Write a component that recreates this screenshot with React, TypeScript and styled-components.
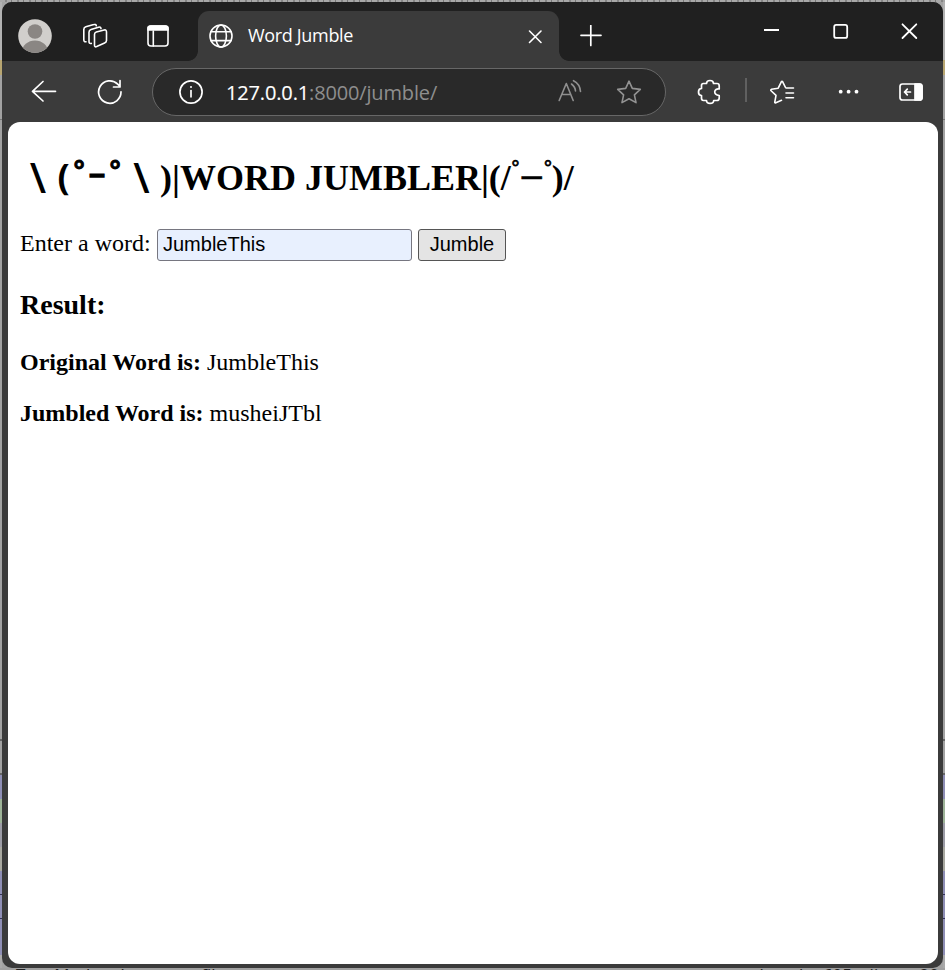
import React from "react";
import styled, { createGlobalStyle } from "styled-components";

const GlobalStyle = createGlobalStyle`
  * { box-sizing: border-box; }
  body { margin: 0; background: #9c9c9c; overflow: hidden; }
`;

const Desktop = styled.div`
  width: 945px;
  height: 970px;
  display: grid;
  grid-template: 2px 966px 2px / 2px 941px 2px;
  overflow: hidden;
  background: #a3a3a3;
`;

const TopEdge = styled.div`
  grid-column: 1 / -1;
  background: repeating-linear-gradient(90deg, #a8a8a8 0 5px, #858585 5px 7px, #a8a8a8 7px 11px, #777 11px 12px);
`;

const SideEdge = styled.div`
  background: linear-gradient(
    #b2b2b2 0 58px, #b8a671 58px 73px, #a2a2a2 73px 117px, #777 117px 118px,
    #a2a2a2 118px 737px, #666 737px 739px, #a2a2a2 739px 771px, #666 771px 773px,
    #8e8eb5 773px 797px, #9db398 797px 821px, #9c9ca6 821px 845px, #a8a8a0 845px 869px,
    #8e8eb5 869px 892px, #333355 892px 893px, #8e8eb5 893px 916px, #333355 916px 917px,
    #8e8eb5 917px 953px, #aaa 953px
  );
`;

const BottomEdge = styled.div`
  grid-column: 1 / -1;
  display: flex;
  justify-content: space-between;
  padding: 0 6px 0 16px;
  overflow: hidden;
  white-space: pre;
  color: #222;
  background: #a0a0a0;
  font: 17px/14px "Open Sans", sans-serif;
`;

const Window = styled.main`
  display: flex;
  flex-direction: column;
  border-radius: 10px;
  background: #3b3b3b;
  overflow: hidden;
`;

const TitleBar = styled.header`
  height: 59px;
  display: flex;
  align-items: flex-start;
  background: #202020;
`;

const Toolbar = styled.nav`
  height: 61px;
  display: flex;
  align-items: flex-start;
  padding-top: 7px;
`;

const IconButton = styled.button<{ $width: number; $height?: number }>`
  flex: none;
  display: flex;
  align-items: center;
  justify-content: center;
  width: ${(p) => p.$width}px;
  height: ${(p) => p.$height ?? 48}px;
  padding: 0;
  border: 0;
  background: transparent;
  color: #fff;
`;

const Tab = styled.div`
  position: relative;
  flex: none;
  width: 361px;
  height: 50px;
  margin-top: 9px;
  margin-left: 4px;
  padding: 0 13px 0 11px;
  display: flex;
  align-items: center;
  border-radius: 11px 11px 0 0;
  background: #3b3b3b;
  color: #fff;
  &::before,
  &::after {
    content: "";
    position: absolute;
    bottom: 0;
    width: 10px;
    height: 10px;
  }
  &::before {
    left: -10px;
    background: radial-gradient(circle at 0 0, transparent 9.5px, #3b3b3b 10.2px);
  }
  &::after {
    right: -10px;
    background: radial-gradient(circle at 100% 0, transparent 9.5px, #3b3b3b 10.2px);
  }
`;

const TabTitle = styled.span`
  flex: 1;
  margin-left: 15px;
  padding-bottom: 2px;
  font: 18px/24px "Open Sans", sans-serif;
  letter-spacing: -0.33px;
`;

const AddressBar = styled.div`
  flex: none;
  width: 514px;
  height: 48px;
  margin-left: 18px;
  display: flex;
  align-items: center;
  border: 1.5px solid #676767;
  border-radius: 24px;
  background: #292929;
`;

const Url = styled.span`
  flex: 1;
  padding: 2px 0 0 1px;
  color: #8e8e8e;
  font: 20px/28px "Open Sans", sans-serif;
  letter-spacing: -0.15px;
  white-space: nowrap;
`;

const Host = styled.span`
  color: #fff;
  -webkit-text-stroke: 0.15px #fff;
`;

const Divider = styled.i`
  width: 2px;
  height: 24px;
  margin-top: 10px;
  background: #606060;
`;

const Spacer = styled.div`
  flex: 1;
`;

const Page = styled.section`
  height: 842px;
  margin: 0 5px 0 6px;
  padding: 29px 12px 0;
  border-radius: 12px;
  background: #fff;
  color: #000;
  font: 24px/27px "Liberation Serif", serif;
`;

const Heading = styled.h2`
  display: flex;
  height: 54px;
  margin: 0;
  font-size: 36px;
  line-height: 54px;
  white-space: pre;
`;

const Glyph = styled.span<{
  $width: number;
  $size?: number;
  $lift?: number;
  $face?: string;
  $weight?: number;
  $stroke?: number;
}>`
  display: flex;
  justify-content: center;
  width: ${(p) => p.$width}px;
  margin-top: ${(p) => -(p.$lift ?? 0)}px;
  font-family: ${(p) => p.$face ?? '"Liberation Sans"'}, sans-serif;
  font-size: ${(p) => p.$size ?? 36}px;
  font-weight: ${(p) => p.$weight ?? 700};
  -webkit-text-stroke: ${(p) => p.$stroke ?? 0}px #000;
`;

const Form = styled.form`
  display: flex;
  height: 32px;
  margin-top: 24px;
`;

const Label = styled.label`
  width: 137px;
  line-height: 29px;
`;

const WordInput = styled.input`
  width: 255px;
  height: 32px;
  padding: 0 5px 2px;
  border: 1px solid #767680;
  border-radius: 3px;
  background: #e8f0fe;
  color: #000;
  font: 20px "Liberation Sans", sans-serif;
`;

const Submit = styled.button`
  width: 88px;
  height: 32px;
  margin-left: 6px;
  padding: 0 0 2px;
  border: 1px solid #555;
  border-radius: 3px;
  background: #e4e4e4;
  color: #000;
  font: 20px "Liberation Sans", sans-serif;
`;

const ResultTitle = styled.h3`
  margin: 28px 0;
  font-size: 28px;
  line-height: 32px;
`;

const Line = styled.p`
  margin: 0 0 24px;
`;

type IconProps = { box: string; color?: string; weight?: number; children: React.ReactNode };

/* Icon boxes are written in window coordinates so neighbouring marks share one grid. */
const Icon = ({ box, color = "#fff", weight = 1.6, children }: IconProps) => {
  const [, , w, h] = box.split(" ");
  return (
    <svg width={w} height={h} viewBox={box} fill="none" stroke={color} strokeWidth={weight}
      strokeLinecap="round" strokeLinejoin="round">
      {children}
    </svg>
  );
};

export default function App() {
  return (
    <>
      <GlobalStyle />
      <Desktop>
        <TopEdge />
        <SideEdge />
        <Window>
          <TitleBar>
            <IconButton $width={66} $height={68} aria-label="Profile">
              <Icon box="18 19 34 34" weight={0}>
                <clipPath id="face"><circle cx="35" cy="36" r="16.8" /></clipPath>
                <circle cx="35" cy="36" r="16.8" fill="#d1cfcc" />
                <g fill="#8a8683" clipPath="url(#face)">
                  <circle cx="35" cy="31.5" r="7.3" />
                  <ellipse cx="35" cy="52" rx="13" ry="11.5" />
                </g>
              </Icon>
            </IconButton>
            <IconButton $width={54} $height={68} aria-label="Workspaces">
              <Icon box="82 23 26 26">
                <path d="M96.3 32 L104.2 30 Q106.5 29.5 106.5 32 V40.5 Q106.5 42.3 104.6 43 L96.7 46.6 Q94.5 47.5 94.5 45.2 V34.5 Q94.5 32.5 96.3 32Z" />
                <path d="M91.3 43.4 Q89 44 89 41.5 V32.3 Q89 30.1 91 29.5 L98.5 27.2 Q100.7 26.6 101 28.6" />
                <path d="M86 41.7 Q83.8 42.2 83.8 39.8 V29.5 Q83.8 27.4 85.8 26.8 L93.8 24.6 Q95.8 24 96.3 25.7" />
              </Icon>
            </IconButton>
            <IconButton $width={72} $height={68} aria-label="Tab actions">
              <Icon box="147 25 22 22">
                <rect x="148" y="26" width="20" height="20" rx="3" />
                <path d="M148 30 V28 Q148 26 150.5 26 H165.5 Q168 26 168 28 V30Z" fill="#fff" />
                <path d="M153.3 31 V46" />
              </Icon>
            </IconButton>
            <Tab>
              <Icon box="209 24 24 24">
                <circle cx="221" cy="36" r="11" />
                <ellipse cx="221" cy="36" rx="5.4" ry="11" />
                <path d="M211 31.8 H231 M211 40.6 H231" />
              </Icon>
              <TabTitle>Word Jumble</TabTitle>
              <Icon box="524 25 22 22">
                <path d="M529.5 31 L541 42.5 M541 31 L529.5 42.5" />
              </Icon>
            </Tab>
            <IconButton $width={64} $height={67} aria-label="New tab">
              <Icon box="580 25 22 22" weight={1.7}>
                <path d="M581 35.3 H601 M590.8 25.5 V45.5" />
              </Icon>
            </IconButton>
            <Spacer />
            <IconButton $width={69} $height={59} aria-label="Minimize">
              <Icon box="764 25 16 16" weight={2}><path d="M764 31 H779" strokeLinecap="butt" /></Icon>
            </IconButton>
            <IconButton $width={69} $height={59} aria-label="Maximize">
              <Icon box="833 24 16 16" weight={1.8}><rect x="834.2" y="24.9" width="13" height="13" rx="2" /></Icon>
            </IconButton>
            <IconButton $width={68} $height={59} aria-label="Close window">
              <Icon box="901 23 17 17" weight={1.8}><path d="M902.5 24.3 L916.3 38 M916.3 24.3 L902.5 38" /></Icon>
            </IconButton>
          </TitleBar>
          <Toolbar>
            <IconButton $width={84} aria-label="Back">
              <Icon box="31 79 26 26" weight={1.7}><path d="M43 81.5 L32.5 91.3 L43 101 M33 91.3 H55.5" /></Icon>
            </IconButton>
            <IconButton $width={48} aria-label="Refresh">
              <Icon box="97 79 26 26" weight={1.7}>
                <path d="M121 91.8 A11.2 11.2 0 1 1 117.7 84.1 L120 86.5 M120 80.5 V87 H113.5" />
              </Icon>
            </IconButton>
            <AddressBar>
              <IconButton $width={72} aria-label="Site information">
                <Icon box="177 79 28 26" weight={1.7}>
                  <circle cx="193" cy="92" r="11.1" />
                  <path d="M193 90.5 V96.8" />
                  <circle cx="193" cy="87" r="1" fill="#fff" stroke="none" />
                </Icon>
              </IconButton>
              <Url><Host>127.0.0.1</Host>:8000/jumble/</Url>
              <IconButton $width={46} aria-label="Read aloud">
                <Icon box="557 79 26 26" color="#8f8f8f">
                  <path d="M559.2 100.5 L566.3 83.5 L573.2 100.5 M561.8 94.5 H570.7 M571.5 84 Q575.3 87 575.5 91 M573.5 80.7 Q580 84 580.5 91.5" />
                </Icon>
              </IconButton>
              <IconButton $width={72} aria-label="Add favorite">
                <Icon box="616 79 26 26" color="#929292">
                  <path d="M629 81.2 L632.3 88.4 L640.3 89.4 L634.4 94.9 L636 102.6 L629 98.8 L622 102.6 L623.6 94.9 L617.7 89.4 L625.7 88.4Z" />
                </Icon>
              </IconButton>
            </AddressBar>
            <IconButton $width={79} $height={47} aria-label="Extensions">
              <Icon box="690 79 31 26" weight={1.7}>
                <path d="M703 83.5 H706.5 C706.5 79.5 713.5 79.5 713.5 83.5 H717 Q719.2 83.5 719.2 85.7 V89 C714 88 712.5 95 719.2 95.5 V98 Q719.2 100.5 716.8 100.5 H713.7 C713.7 104.3 706.5 104.3 706.5 100.5 H703.5 Q701.5 100.5 701.5 98.3 V95.5 C697.5 95.5 697.5 88.5 701.5 88.5 V85.5 Q701.5 83.5 703.5 83.5Z" />
              </Icon>
            </IconButton>
            <Divider />
            <IconButton $width={70} aria-label="Favorites">
              <Icon box="769 79 26 26">
                <path d="M781.5 100.3 L775.3 103 Q774.7 103 774.8 102 L776 95.3 L770.8 90.5 Q770.5 89.6 771.5 89.2 L778.2 88.2 L781.3 81.8 Q782 80.8 782.7 81.8 L785.5 87.5 M786 88 H793.5 M786 93 H793.5 M786 97.7 H793.5" />
              </Icon>
            </IconButton>
            <IconButton $width={64} aria-label="More">
              <Icon box="837 80 24 24" weight={0}>
                <g fill="#fff"><circle cx="840.7" cy="91.7" r="1.9" /><circle cx="848.6" cy="91.7" r="1.9" /><circle cx="856.5" cy="91.7" r="1.9" /></g>
              </Icon>
            </IconButton>
            <IconButton $width={60} aria-label="Sidebar">
              <Icon box="898 80 26 24" weight={1.7}>
                <rect x="900" y="84" width="22" height="16" rx="2.5" />
                <path d="M915 84 H919.5 Q922 84 922 86.5 V97.5 Q922 100 919.5 100 H915Z" fill="#fff" />
                <path d="M910.5 92 H904.5 M907.3 89.2 L904.5 92 L907.3 94.8" />
              </Icon>
            </IconButton>
          </Toolbar>
          <Page>
            <Heading>
              <Glyph $width={36} $size={42} $lift={1} $weight={600} $face={'"Open Sans"'}>\</Glyph>
              <Glyph $width={15} $lift={1} $face={'"Open Sans"'}>(</Glyph>
              <Glyph $width={16} $size={28} $lift={7} $stroke={1}>°</Glyph>
              <Glyph $width={20} $size={28} $lift={4} $stroke={1.3}>–</Glyph>
              <Glyph $width={16} $size={28} $lift={7} $stroke={1}>°</Glyph>
              <Glyph $width={37} $size={42} $lift={1} $weight={600} $face={'"Open Sans"'}>\</Glyph>
              <span>)|WORD JUMBLER|(/</span>
              <Glyph $width={9} $size={21} $lift={10} $weight={400} $stroke={0.7}>°</Glyph>
              <Glyph $width={24} $lift={3} $weight={400} $stroke={0.7}>–</Glyph>
              <Glyph $width={8} $size={21} $lift={10} $weight={400} $stroke={0.7}>°</Glyph>
              <span>)/</span>
            </Heading>
            <Form onSubmit={(e) => e.preventDefault()}>
              <Label htmlFor="word">Enter a word:</Label>
              <WordInput id="word" defaultValue="JumbleThis" />
              <Submit>Jumble</Submit>
            </Form>
            <ResultTitle>Result:</ResultTitle>
            <Line><b>Original Word is:</b> JumbleThis</Line>
            <Line><b>Jumbled Word is:</b> musheiJTbl</Line>
          </Page>
        </Window>
        <SideEdge />
        <BottomEdge><span>Text Markup Language file</span><span>length : 605    lines : 20</span></BottomEdge>
      </Desktop>
    </>
  );
}
